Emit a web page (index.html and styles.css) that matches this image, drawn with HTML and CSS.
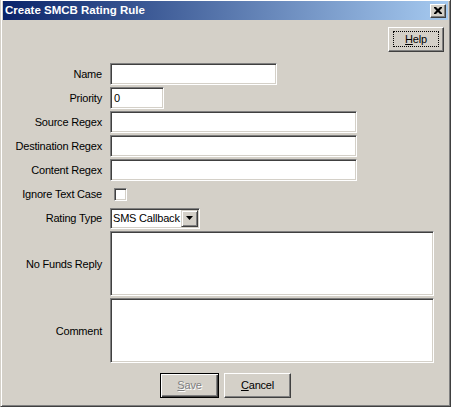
FILE: index.html
```html
<!DOCTYPE html>
<html>
<head>
<meta charset="utf-8">
<link rel="stylesheet" href="styles.css">
</head>
<body>
<div class="window">
  <div class="titlebar">
    <span class="title">Create SMCB Rating Rule</span>
    <span class="close"><svg width="8" height="7" viewBox="0 0 8 7"><path d="M0 0h2l2 2 2-2h2v1l-2.5 2.5L8 6v1H6L4 5 2 7H0V6l2.5-2.5L0 1z" fill="#000"/></svg></span>
  </div>
  <div class="content">
    <div class="toolbar">
      <div class="btn help"><span class="focus"><u>H</u>elp</span></div>
    </div>
    <div class="form">
      <div class="label">Name</div>
      <div class="cell"><div class="input w-name"></div></div>
      <div class="label">Priority</div>
      <div class="cell"><div class="input w-priority">0</div></div>
      <div class="label">Source Regex</div>
      <div class="cell"><div class="input w-wide"></div></div>
      <div class="label">Destination Regex</div>
      <div class="cell"><div class="input w-wide"></div></div>
      <div class="label">Content Regex</div>
      <div class="cell"><div class="input w-wide"></div></div>
      <div class="label">Ignore Text Case</div>
      <div class="cell"><div class="checkbox"></div></div>
      <div class="label">Rating Type</div>
      <div class="cell"><div class="combo"><span class="combo-text">SMS Callback</span><span class="combo-btn"><svg width="7" height="4" viewBox="0 0 7 4"><path d="M0 0h7L3.5 4z" fill="#000"/></svg></span></div></div>
      <div class="label">No Funds Reply</div>
      <div class="cell"><div class="input area"></div></div>
      <div class="label">Comment</div>
      <div class="cell"><div class="input area"></div></div>
    </div>
    <div class="actions">
      <div class="btn default disabled w-save"><u>S</u>ave</div>
      <div class="btn w-cancel"><u>C</u>ancel</div>
    </div>
  </div>
</div>
</body>
</html>
```
FILE: styles.css
```css
html, body {
  margin: 0;
  padding: 0;
  background: #d4d0c8;
}
.window {
  width: 451px;
  height: 407px;
  box-sizing: border-box;
  background: #d4d0c8;
  border-left: 1px solid #d4d0c8;
  border-right: 1px solid #404040;
  border-bottom: 1px solid #404040;
  box-shadow: inset 1px 1px #ffffff, inset -1px -1px #808080;
  padding: 1px 2px 2px 2px;
  display: flex;
  flex-direction: column;
  font-family: "Liberation Sans", Arial, sans-serif;
  font-size: 11px;
  letter-spacing: -0.2px;
  color: #000;
}
.titlebar {
  height: 19px;
  background: linear-gradient(to right, #0a246a, #a6caf0);
  display: flex;
  align-items: center;
  justify-content: space-between;
  padding: 0 2px 0 2px;
}
.title {
  color: #fff;
  font-weight: bold;
  font-size: 11.5px;
  letter-spacing: 0;
  line-height: 19px;
}
.close {
  width: 16px;
  height: 14px;
  box-sizing: border-box;
  background: #d4d0c8;
  border: 1px solid;
  border-color: #ffffff #404040 #404040 #ffffff;
  box-shadow: inset -1px -1px #808080;
  display: flex;
  align-items: center;
  justify-content: center;
  padding: 0 1px 1px 0;
}
.close svg { display: block; }
.content {
  flex: 1;
  display: flex;
  flex-direction: column;
  padding-top: 7px;
}
.toolbar {
  display: flex;
  justify-content: flex-end;
  padding-right: 4px;
}
.btn {
  box-sizing: border-box;
  height: 25px;
  background: #d4d0c8;
  border: 1px solid;
  border-color: #ffffff #404040 #404040 #ffffff;
  box-shadow: inset -1px -1px #808080;
  display: flex;
  align-items: center;
  justify-content: center;
  line-height: 13px;
}
.btn u { text-decoration: underline; text-underline-offset: 1px; }
.help {
  width: 56px;
  padding: 3px 4px 4px 4px;
}
.focus {
  flex: 1;
  align-self: stretch;
  display: flex;
  align-items: center;
  justify-content: center;
  border: 1px dotted #000;
}
.default {
  border-color: #000;
  box-shadow: inset 1px 1px #ffffff, inset -1px -1px #404040, inset -2px -2px #808080;
}
.disabled {
  color: #808080;
  text-shadow: 1px 1px #ffffff;
}
.w-save { width: 59px; }
.w-cancel { width: 67px; }
.form {
  margin-top: 11px;
  display: grid;
  grid-template-columns: 99px 1fr;
  grid-template-rows: 22px 22px 22px 22px 22px 22px 22px 65px 65px;
  column-gap: 8px;
  row-gap: 2px;
}
.label {
  justify-self: end;
  align-self: center;
  white-space: nowrap;
}
.cell {
  display: flex;
  align-items: center;
}
.input {
  box-sizing: border-box;
  height: 22px;
  background: #fff;
  border: 1px solid;
  border-color: #808080 #ffffff #ffffff #808080;
  box-shadow: inset 1px 1px #404040, inset -1px -1px #d4d0c8;
  padding: 0 3px;
  line-height: 20px;
}
.w-name { width: 167px; }
.w-priority { width: 54px; }
.w-wide { width: 247px; }
.area { width: 324px; height: 65px; }
.checkbox {
  box-sizing: border-box;
  width: 13px;
  height: 13px;
  margin-left: 4px;
  background: #fff;
  border: 1px solid;
  border-color: #808080 #ffffff #ffffff #808080;
  box-shadow: inset 1px 1px #404040, inset -1px -1px #d4d0c8;
}
.combo {
  box-sizing: border-box;
  width: 90px;
  height: 21px;
  background: #fff;
  border: 1px solid;
  border-color: #808080 #ffffff #ffffff #808080;
  box-shadow: inset 1px 1px #404040, inset -1px -1px #d4d0c8;
  padding: 1px;
  display: flex;
  align-items: stretch;
}
.combo-text {
  flex: 1;
  padding-left: 1px;
  line-height: 17px;
  white-space: nowrap;
  overflow: hidden;
}
.combo-btn {
  width: 17px;
  box-sizing: border-box;
  background: #d4d0c8;
  border: 1px solid;
  border-color: #d4d0c8 #404040 #404040 #d4d0c8;
  box-shadow: inset 1px 1px #ffffff, inset -1px -1px #808080;
  display: flex;
  align-items: center;
  justify-content: center;
}
.combo-btn svg { display: block; }
.actions {
  margin-top: 10px;
  display: flex;
  justify-content: center;
  gap: 5px;
}
```
